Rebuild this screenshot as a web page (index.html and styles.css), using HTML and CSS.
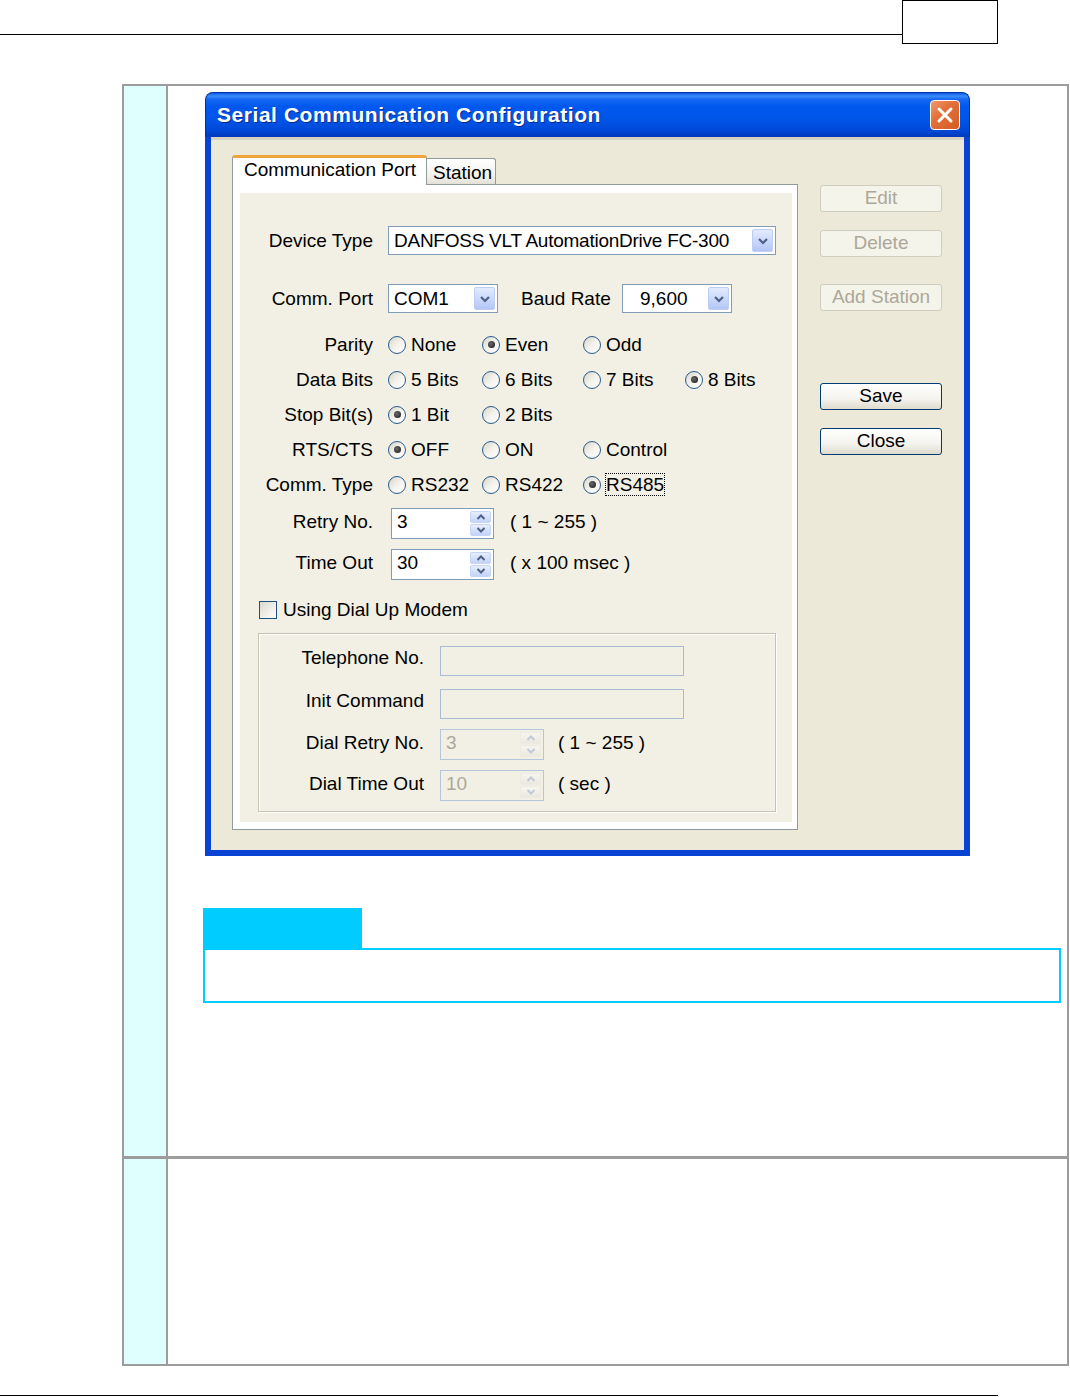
FILE: index.html
```html
<!DOCTYPE html>
<html>
<head>
<meta charset="utf-8">
<title>Serial Communication Configuration</title>
<link rel="stylesheet" href="styles.css">
</head>
<body>
<div class="page-header">
  <div class="header-line"></div>
  <div class="header-box"></div>
</div>

<div class="doc-table">
  <div class="doc-row row-first">
    <div class="side-cell"></div>
    <div class="main-cell">
      <div class="dialog">
        <div class="titlebar">
          <span class="title">Serial Communication Configuration</span>
          <span class="close-btn"><svg width="18" height="18" viewBox="0 0 18 18"><path d="M3 3 L15 15 M15 3 L3 15" stroke="#fff" stroke-width="3" stroke-linecap="round"/></svg></span>
        </div>
        <div class="dialog-body">
          <div class="tabs-area">
            <div class="tab-strip">
              <div class="tab tab-active">Communication Port</div>
              <div class="tab tab-inactive">Station</div>
            </div>
            <div class="tab-panel">
              <div class="panel-inner">
                <div class="row row-device">
                  <span class="lbl">Device Type</span>
                  <div class="combo combo-wide"><span class="combo-text combo-text-device">DANFOSS VLT AutomationDrive FC-300</span><span class="combo-btn"><svg width="12" height="8" viewBox="0 0 12 8"><path d="M2 2 L6 6 L10 2" stroke="#4d6185" stroke-width="2.2" fill="none"/></svg></span></div>
                </div>
                <div class="row row-port">
                  <span class="lbl">Comm. Port</span>
                  <div class="combo combo-small"><span class="combo-text">COM1</span><span class="combo-btn"><svg width="12" height="8" viewBox="0 0 12 8"><path d="M2 2 L6 6 L10 2" stroke="#4d6185" stroke-width="2.2" fill="none"/></svg></span></div>
                  <span class="lbl-inline">Baud Rate</span>
                  <div class="combo combo-small"><span class="combo-text combo-text-baud">9,600</span><span class="combo-btn"><svg width="12" height="8" viewBox="0 0 12 8"><path d="M2 2 L6 6 L10 2" stroke="#4d6185" stroke-width="2.2" fill="none"/></svg></span></div>
                </div>

                <div class="radio-rows">
                  <div class="radio-row">
                    <span class="lbl">Parity</span>
                    <span class="opt"><span class="radio"></span>None</span>
                    <span class="opt"><span class="radio on"></span>Even</span>
                    <span class="opt"><span class="radio"></span>Odd</span>
                  </div>
                  <div class="radio-row">
                    <span class="lbl">Data Bits</span>
                    <span class="opt"><span class="radio"></span>5 Bits</span>
                    <span class="opt"><span class="radio"></span>6 Bits</span>
                    <span class="opt"><span class="radio"></span>7 Bits</span>
                    <span class="opt"><span class="radio on"></span>8 Bits</span>
                  </div>
                  <div class="radio-row">
                    <span class="lbl">Stop Bit(s)</span>
                    <span class="opt"><span class="radio on"></span>1 Bit</span>
                    <span class="opt"><span class="radio"></span>2 Bits</span>
                  </div>
                  <div class="radio-row">
                    <span class="lbl">RTS/CTS</span>
                    <span class="opt"><span class="radio on"></span>OFF</span>
                    <span class="opt"><span class="radio"></span>ON</span>
                    <span class="opt"><span class="radio"></span>Control</span>
                  </div>
                  <div class="radio-row">
                    <span class="lbl">Comm. Type</span>
                    <span class="opt"><span class="radio"></span>RS232</span>
                    <span class="opt"><span class="radio"></span>RS422</span>
                    <span class="opt"><span class="radio on"></span><span class="focus">RS485</span></span>
                  </div>
                </div>

                <div class="row row-spin row-retry">
                  <span class="lbl">Retry No.</span>
                  <div class="spin"><span class="spin-text">3</span><span class="spin-btns"><span class="spin-b"><svg width="10" height="6" viewBox="0 0 10 6"><path d="M1.5 5 L5 1.5 L8.5 5" stroke="#4d6185" stroke-width="2" fill="none"/></svg></span><span class="spin-b"><svg width="10" height="6" viewBox="0 0 10 6"><path d="M1.5 1 L5 4.5 L8.5 1" stroke="#4d6185" stroke-width="2" fill="none"/></svg></span></span></div>
                  <span class="hint">( 1 ~ 255 )</span>
                </div>
                <div class="row row-spin row-timeout">
                  <span class="lbl">Time Out</span>
                  <div class="spin"><span class="spin-text">30</span><span class="spin-btns"><span class="spin-b"><svg width="10" height="6" viewBox="0 0 10 6"><path d="M1.5 5 L5 1.5 L8.5 5" stroke="#4d6185" stroke-width="2" fill="none"/></svg></span><span class="spin-b"><svg width="10" height="6" viewBox="0 0 10 6"><path d="M1.5 1 L5 4.5 L8.5 1" stroke="#4d6185" stroke-width="2" fill="none"/></svg></span></span></div>
                  <span class="hint">( x 100 msec )</span>
                </div>

                <div class="check-row">
                  <span class="checkbox"></span>
                  <span>Using Dial Up Modem</span>
                </div>

                <div class="group">
                  <div class="grow grow-tel">
                    <span class="glbl">Telephone No.</span>
                    <div class="field"></div>
                  </div>
                  <div class="grow grow-init">
                    <span class="glbl">Init Command</span>
                    <div class="field"></div>
                  </div>
                  <div class="grow grow-dial">
                    <span class="glbl">Dial Retry No.</span>
                    <div class="spin spin-disabled"><span class="spin-text">3</span><span class="spin-btns"><span class="spin-b"><svg width="10" height="6" viewBox="0 0 10 6"><path d="M1.5 5 L5 1.5 L8.5 5" stroke="#c3c9d6" stroke-width="2" fill="none"/></svg></span><span class="spin-b"><svg width="10" height="6" viewBox="0 0 10 6"><path d="M1.5 1 L5 4.5 L8.5 1" stroke="#c3c9d6" stroke-width="2" fill="none"/></svg></span></span></div>
                    <span class="ghint">( 1 ~ 255 )</span>
                  </div>
                  <div class="grow grow-dial">
                    <span class="glbl">Dial Time Out</span>
                    <div class="spin spin-disabled"><span class="spin-text">10</span><span class="spin-btns"><span class="spin-b"><svg width="10" height="6" viewBox="0 0 10 6"><path d="M1.5 5 L5 1.5 L8.5 5" stroke="#c3c9d6" stroke-width="2" fill="none"/></svg></span><span class="spin-b"><svg width="10" height="6" viewBox="0 0 10 6"><path d="M1.5 1 L5 4.5 L8.5 1" stroke="#c3c9d6" stroke-width="2" fill="none"/></svg></span></span></div>
                    <span class="ghint">( sec )</span>
                  </div>
                </div>
              </div>
            </div>
          </div>
          <div class="side-buttons">
            <div class="btn btn-disabled btn-edit">Edit</div>
            <div class="btn btn-disabled btn-delete">Delete</div>
            <div class="btn btn-disabled btn-add">Add Station</div>
            <div class="btn btn-save">Save</div>
            <div class="btn btn-close">Close</div>
          </div>
        </div>
      </div>

      <div class="note">
        <div class="note-tab"></div>
        <div class="note-box"></div>
      </div>
    </div>
  </div>
  <div class="doc-row row-second">
    <div class="side-cell"></div>
    <div class="main-cell"></div>
  </div>
</div>

<div class="footer-line"></div>
</body>
</html>
```

FILE: styles.css
```css
html, body {
  margin: 0;
  padding: 0;
  background: #ffffff;
}
body {
  font-family: "Liberation Sans", Arial, sans-serif;
  font-size: 19px;
  color: #000;
  width: 1070px;
  height: 1397px;
  overflow: hidden;
}

/* page header */
.page-header {
  display: flex;
  height: 44px;
}
.header-line {
  width: 902px;
  height: 1px;
  margin-top: 34px;
  background: #000;
}
.header-box {
  width: 96px;
  height: 44px;
  box-sizing: border-box;
  border: 1px solid #000;
}

/* document table */
.doc-table {
  margin-top: 40px;
  margin-left: 122px;
  width: 947px;
  box-sizing: border-box;
  border: 2px solid #9c9c9c;
}
.doc-row {
  display: flex;
}
.row-first {
  height: 1070px;
}
.row-second {
  height: 205px;
  border-top: 3px solid #9c9c9c;
}
.side-cell {
  width: 42px;
  background: #dfffff;
  border-right: 2px solid #9c9c9c;
  flex-shrink: 0;
}
.main-cell {
  flex: 1;
  display: flex;
  flex-direction: column;
}

/* dialog */
.dialog {
  margin-top: 6px;
  margin-left: 37px;
  width: 765px;
}
.titlebar {
  height: 45px;
  border-radius: 8px 8px 0 0;
  background: linear-gradient(#0a5bea 0%, #3d8cf8 7%, #1769f3 14%, #0058ee 30%, #0055e8 60%, #0048d8 85%, #0039b9 100%);
  display: flex;
  align-items: center;
  justify-content: space-between;
  padding: 0 9px 0 11px;
  box-sizing: border-box;
  border: 1px solid #0031a8;
  border-bottom: none;
}
.title {
  color: #fff;
  font-weight: bold;
  font-size: 21px;
  letter-spacing: 0.55px;
  text-shadow: 1px 1px 0 #0a2a8a;
  margin-top: -1px;
}
.close-btn {
  width: 30px;
  height: 30px;
  box-sizing: border-box;
  border: 1px solid #fff;
  border-radius: 4px;
  background: linear-gradient(135deg, #f09a70 0%, #e2703a 40%, #d55c22 100%);
  display: flex;
  align-items: center;
  justify-content: center;
}
.dialog-body {
  display: flex;
  background: #ece9d8;
  border: 6px solid #0843d4;
  border-top: none;
  box-shadow: inset 0 3px 0 #d6d3c3;
  padding: 18px 22px 20px 21px;
  box-sizing: content-box;
  height: 675px;
}

/* tabs */
.tabs-area {
  width: 566px;
  display: flex;
  flex-direction: column;
}
.tab-strip {
  display: flex;
  align-items: flex-end;
  height: 29px;
  position: relative;
  z-index: 1;
}
.tab {
  box-sizing: border-box;
  display: flex;
  align-items: center;
}
.tab-active {
  width: 195px;
  height: 30px;
  margin-bottom: -1px;
  background: #fff;
  border: 1px solid #919b9c;
  border-bottom: none;
  border-top: 3px solid #f1a43a;
  border-radius: 3px 3px 0 0;
  padding-left: 11px;
  padding-bottom: 3px;
}
.tab-inactive {
  width: 69px;
  height: 26px;
  background: linear-gradient(#ffffff, #f1f0ea 70%, #e3e1d6);
  border: 1px solid #919b9c;
  border-bottom: none;
  border-left: none;
  border-radius: 0 3px 0 0;
  padding-left: 6px;
  padding-top: 2px;
}
.tab-panel {
  height: 646px;
  box-sizing: border-box;
  border: 1px solid #919b9c;
  background: #fff;
  padding: 8px 5px 7px 7px;
  display: flex;
}
.panel-inner {
  flex: 1;
  background: #f2f0e4;
  padding-top: 33px;
  display: flex;
  flex-direction: column;
}

/* rows */
.row {
  display: flex;
  align-items: center;
}
.lbl {
  width: 148px;
  flex-shrink: 0;
  box-sizing: border-box;
  padding-right: 15px;
  text-align: right;
}
.row-device, .row-port {
  height: 29px;
}
.row-port {
  margin-top: 29px;
}
.combo {
  height: 29px;
  box-sizing: border-box;
  border: 1px solid #7f9db9;
  background: #fff;
  display: flex;
  align-items: center;
  justify-content: space-between;
  padding: 2px;
}
.combo-wide {
  width: 388px;
}
.combo-small {
  width: 110px;
}
.combo-text {
  padding-left: 3px;
}
.combo-text-device {
  letter-spacing: -0.25px;
}
.combo-text-baud {
  padding-left: 15px;
}
.combo-btn {
  width: 21px;
  height: 23px;
  box-sizing: border-box;
  border: 1px solid #bccdf6;
  border-radius: 2px;
  background: linear-gradient(#e3ebfd, #c5d5fb 60%, #b3c6f5);
  display: flex;
  align-items: center;
  justify-content: center;
}
.lbl-inline {
  margin-left: 23px;
  width: 101px;
}

.radio-rows {
  margin-top: 14px;
}
.radio-row {
  display: grid;
  grid-template-columns: 148px 94px 101px 102px auto;
  height: 35px;
  align-items: center;
}
.opt {
  display: flex;
  align-items: center;
}
.radio {
  width: 18px;
  height: 18px;
  box-sizing: border-box;
  border-radius: 50%;
  border: 1px solid #2a5a8c;
  background: linear-gradient(135deg, #d9d6c8 0%, #f3f2ec 50%, #ffffff 100%);
  margin-right: 5px;
  display: flex;
  align-items: center;
  justify-content: center;
}
.radio.on::after {
  content: "";
  width: 7px;
  height: 7px;
  border-radius: 50%;
  background: radial-gradient(circle at 40% 40%, #6a6a6a, #151515);
}
.focus {
  outline: 1px dotted #000;
  outline-offset: 0;
  line-height: 21px;
}

.row-spin {
  height: 31px;
}
.row-retry {
  margin-top: 6px;
}
.row-timeout {
  margin-top: 10px;
}
.row-spin .spin {
  margin-left: 3px;
}
.row-spin .lbl {
  margin-top: -3px;
}
.spin {
  width: 103px;
  height: 31px;
  box-sizing: border-box;
  border: 1px solid #7f9db9;
  background: #fff;
  display: flex;
  justify-content: space-between;
  padding: 2px;
}
.spin-text {
  padding-left: 3px;
  line-height: 21px;
}
.spin-btns {
  width: 21px;
  display: flex;
  flex-direction: column;
  gap: 1px;
}
.spin-b {
  flex: 1;
  box-sizing: border-box;
  border: 1px solid #c6d4f5;
  border-radius: 2px;
  background: linear-gradient(#e6eefd, #c3d3f9);
  display: flex;
  align-items: center;
  justify-content: center;
}
.hint {
  margin-left: 16px;
  margin-top: -3px;
}

.check-row {
  margin-top: 20px;
  height: 20px;
  display: flex;
  align-items: center;
  padding-left: 19px;
}
.checkbox {
  width: 18px;
  height: 18px;
  box-sizing: border-box;
  border: 1px solid #1c5180;
  background: linear-gradient(135deg, #dcd9cb, #ffffff);
  margin-right: 6px;
}

.group {
  margin-top: 13px;
  margin-left: 18px;
  width: 518px;
  height: 179px;
  box-sizing: border-box;
  border: 1px solid #c6c3b3;
  box-shadow: inset 1px 1px 0 #ffffff, 1px 1px 0 #ffffff;
  padding-top: 12px;
}
.grow {
  display: flex;
  align-items: center;
}
.glbl {
  width: 181px;
  flex-shrink: 0;
  box-sizing: border-box;
  padding-right: 16px;
  text-align: right;
}
.grow-tel, .grow-init {
  height: 30px;
}
.grow-tel .glbl, .grow-init .glbl {
  margin-top: -6px;
}
.grow-init {
  margin-top: 13px;
}
.grow-dial {
  height: 31px;
  margin-top: 10px;
}
.grow-dial .glbl, .grow-dial .ghint {
  margin-top: -3px;
}
.field {
  width: 244px;
  height: 30px;
  box-sizing: border-box;
  border: 1px solid #a9bbd3;
  background: #f2f0e4;
}
.spin-disabled {
  width: 104px;
  border-color: #b5c5dc;
  background: #f2f0e4;
  color: #aca899;
}
.spin-disabled .spin-b {
  border-color: #eceae2;
  background: linear-gradient(#f6f5ef, #ebe9df);
}
.ghint {
  margin-left: 14px;
}

/* side buttons */
.side-buttons {
  margin-left: 22px;
  width: 122px;
  padding-top: 30px;
  display: flex;
  flex-direction: column;
}
.btn {
  height: 27px;
  box-sizing: border-box;
  border-radius: 3px;
  display: flex;
  align-items: center;
  justify-content: center;
  font-size: 19px;
  padding-bottom: 2px;
}
.btn-disabled {
  border: 1px solid #cfccc0;
  background: #f5f4ea;
  color: #aca899;
}
.btn-delete {
  margin-top: 18px;
}
.btn-add {
  margin-top: 27px;
}
.btn-save {
  margin-top: 72px;
}
.btn-close {
  margin-top: 18px;
}
.btn-save, .btn-close {
  border: 1px solid #003c74;
  background: linear-gradient(#ffffff, #f4f3ee 60%, #dedbcd);
  color: #000;
}

/* cyan note */
.note {
  margin-top: 52px;
  margin-left: 35px;
}
.note-tab {
  width: 159px;
  height: 40px;
  background: #00ccff;
}
.note-box {
  width: 858px;
  height: 55px;
  box-sizing: border-box;
  border: 2px solid #00ccff;
}

.footer-line {
  margin-top: 29px;
  width: 998px;
  height: 1px;
  background: #000;
}
```
